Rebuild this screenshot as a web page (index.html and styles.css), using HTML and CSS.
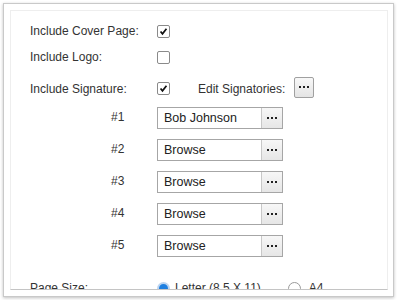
FILE: index.html
```html
<!DOCTYPE html>
<html lang="en">
<head>
    <meta charset="UTF-8">
    <title>Report Options</title>
    <link rel="stylesheet" href="styles.css">
</head>
<body>
    <div class="panel">
        <div class="content">
            <!-- include options -->
            <div class="row">
                <span class="label">Include Cover Page:</span>
                <span class="check checked"><svg viewBox="0 0 13 13"><path d="M3 6.5 L5.3 9.3 L10 3.2" /></svg></span>
            </div>
            <div class="row">
                <span class="label">Include Logo:</span>
                <span class="check"></span>
            </div>
            <div class="row tall">
                <span class="label">Include Signature:</span>
                <span class="check checked"><svg viewBox="0 0 13 13"><path d="M3 6.5 L5.3 9.3 L10 3.2" /></svg></span>
                <span class="editLabel">Edit Signatories:</span>
                <span class="dotsButton"><span class="dots"><i></i><i></i><i></i></span></span>
            </div>

            <!-- signatories -->
            <div class="signer">
                <span class="num">#1</span>
                <div class="picker"><span class="pickerText">Bob Johnson</span><span class="pickerBtn"><span class="dots"><i></i><i></i><i></i></span></span></div>
            </div>
            <div class="signer">
                <span class="num">#2</span>
                <div class="picker"><span class="pickerText">Browse</span><span class="pickerBtn"><span class="dots"><i></i><i></i><i></i></span></span></div>
            </div>
            <div class="signer">
                <span class="num">#3</span>
                <div class="picker"><span class="pickerText">Browse</span><span class="pickerBtn"><span class="dots"><i></i><i></i><i></i></span></span></div>
            </div>
            <div class="signer">
                <span class="num">#4</span>
                <div class="picker"><span class="pickerText">Browse</span><span class="pickerBtn"><span class="dots"><i></i><i></i><i></i></span></span></div>
            </div>
            <div class="signer">
                <span class="num">#5</span>
                <div class="picker"><span class="pickerText">Browse</span><span class="pickerBtn"><span class="dots"><i></i><i></i><i></i></span></span></div>
            </div>

            <!-- page size -->
            <div class="row pageSize">
                <span class="label">Page Size:</span>
                <span class="radio on"></span>
                <span class="radioText">Letter (8.5 X 11)</span>
                <span class="radio"></span>
                <span class="radioText">A4</span>
            </div>
        </div>
    </div>
</body>
</html>
```

FILE: styles.css
```css
body {
    margin: 0;
    background-color: #ffffff;
    font-family: 'Liberation Sans', Arial, sans-serif;
    font-size: 12px;
    color: #333333;
}

.panel {
    box-sizing: border-box;
    width: 391px;
    height: 294px;
    margin: 3px;
    padding: 6px 5px 6px 6px;
    border: 1px solid #c9c9c9;
    box-shadow: 0 1px 3px rgba(0, 0, 0, 0.25);
    background-color: #ffffff;
}

.content {
    box-sizing: border-box;
    height: 280px;
    padding: 7px 0 0 19px;
    border: 1px solid #eeeeee;
    border-bottom: 1px solid #c4c4c4;
    overflow: hidden;
}

.row {
    display: flex;
    align-items: center;
    height: 26px;
}

.row.tall {
    height: 37px;
}

.label {
    width: 126px;
    flex-shrink: 0;
}

.check {
    box-sizing: border-box;
    width: 13px;
    height: 13px;
    margin-left: 1px;
    border: 1px solid #8a8a8a;
    border-radius: 2px;
    background-color: #ffffff;
    display: flex;
}

.check svg {
    width: 11px;
    height: 11px;
}

.check path {
    fill: none;
    stroke: #111111;
    stroke-width: 2;
}

.editLabel {
    margin-left: 28px;
}

.dotsButton {
    box-sizing: border-box;
    width: 20px;
    height: 21px;
    margin-left: 9px;
    margin-top: -3px;
    border: 1px solid #a0a0a0;
    border-radius: 2px;
    background: linear-gradient(#f8f8f8, #e4e4e4);
    display: flex;
    align-items: center;
    justify-content: center;
}

.dots {
    display: flex;
    gap: 2px;
}

.dots i {
    width: 2px;
    height: 2px;
    background-color: #222222;
}

.signer {
    display: flex;
    align-items: flex-start;
    height: 32px;
}

.num {
    width: 126px;
    flex-shrink: 0;
    box-sizing: border-box;
    padding-left: 81px;
    line-height: 20px;
}

.picker {
    box-sizing: border-box;
    width: 126px;
    height: 22px;
    margin-left: 1px;
    border: 1px solid #a6a6a6;
    display: flex;
    background-color: #ffffff;
}

.pickerText {
    flex: 1;
    padding-left: 6px;
    line-height: 20px;
    font-size: 12.5px;
    color: #222222;
}

.pickerBtn {
    width: 20px;
    border-left: 1px solid #c8c8c8;
    background: linear-gradient(#f7f7f7, #e6e6e6);
    display: flex;
    align-items: center;
    justify-content: center;
}

.row.pageSize {
    margin-top: 12px;
    height: 18px;
}

.radio {
    box-sizing: border-box;
    width: 13px;
    height: 13px;
    margin-left: 1px;
    border: 1px solid #9a9a9a;
    border-radius: 50%;
    background-color: #ffffff;
}

.radio.on {
    border: 2px solid #bcd4f0;
    background-color: #1e7fe0;
}

.radioText {
    margin-left: 5px;
    margin-right: 26px;
}

.radioText:last-child {
    margin-left: 8px;
}
```
